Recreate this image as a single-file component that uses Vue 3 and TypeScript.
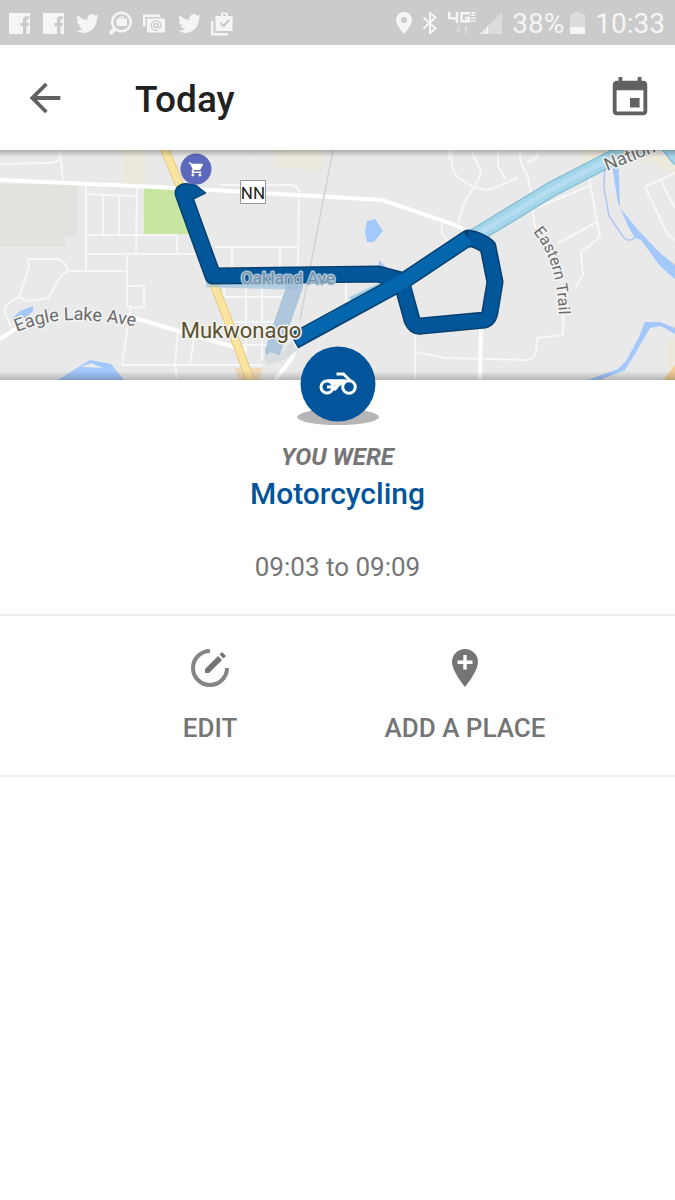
<script setup lang="ts">
interface Action {
  id: string
  label: string
}

const actions: Action[] = [
  { id: 'edit', label: 'EDIT' },
  { id: 'place', label: 'ADD A PLACE' },
]

const notifications: string[] = ['facebook', 'facebook', 'twitter', 'jobs', 'mail', 'twitter', 'bag']

const minorRoads: string[] = [
  'M0 164 L48 163 Q58 162 61 159 L59 150 M61 159 L63 180',
  'M86 184 V270 M86 194 L135 196 M103 195 V235 M119 196 V235 M137 188 L136 254 M86 235 H177 V254 M86 254 H205',
  'M127 255 V305 Q130 309 144 307 V286 H127 M127 271 H70 Q63 272 59 279 L48 298 L28 301 L19 297 L29 267 L28 259 H58 Q66 262 68 271',
  'M19 297 Q2 305 5 313 L11 327 M131 305 L122 365 H240 M178 330 L175 365 L177 379 M194 338 L190 365',
  'M220 185 H293 Q299 188 299 192 L298 270 M215 247 H298 M232 247 V270 M280 247 V270',
  'M224 288 V297 M246 285 V355 M262 288 V360 M225 297 H282 M222 322 H275 M235 345 H270 M225 365 H262',
  'M346 282 V302 M415 329 V379 M416 352 L445 358 L528 360 Q535 358 536 352 L537 338 L563 335 L564 290',
  'M452 150 Q450 172 459 178 L473 187 L488 190 Q505 184 518 177 M471 150 L481 172 Q478 183 465 201 L458 223',
  'M498 150 V166 L506 180 M520 150 Q519 164 527 174 L531 193 L535 228 M539 150 Q538 160 526 163',
  'M449 160 Q450 147 447 144 M443 222 Q438 235 449 242',
  'M589 178 L600 237 L581 252 L583 275 L576 287 M536 208 L589 186 M558 243 L597 222',
  'M675 173 L645 187 L668 235 L675 240 M661 181 L675 208',
]
</script>

<template>
  <main class="screen">
    <header class="status">
      <div class="status-left">
        <svg v-for="(name, i) in notifications" :key="i" class="status-icon" viewBox="0 0 24 24" aria-hidden="true">
          <path v-if="name === 'facebook'" fill-rule="evenodd" d="M1 2h21v21h-3.500v-8h2l.5-3h-2.500v-2c0-1.200.5-1.700 1.500-1.700h1V5.300h-2.500C16 5.300 15 7 15 9.500V12h-2.500v3H15v8H1z" />
          <path v-else-if="name === 'twitter'" transform="translate(-.5 .5)" d="M23.600 4.900a9.600 9.600 0 0 1-2.700.75 4.700 4.700 0 0 0 2-2.600 9.500 9.500 0 0 1-3 1.150 4.700 4.700 0 0 0-8 4.300A13.400 13.400 0 0 1 2.200 3.600a4.700 4.700 0 0 0 1.450 6.300 4.700 4.700 0 0 1-2.150-.6v.06a4.700 4.700 0 0 0 3.800 4.600 4.700 4.700 0 0 1-2.150.08 4.700 4.700 0 0 0 4.400 3.300A9.500 9.500 0 0 1 .6 19.300a13.400 13.400 0 0 0 7.250 2.100c8.700 0 13.800-7.400 13.500-14.100a9.600 9.600 0 0 0 2.250-2.400z" />
          <g v-else-if="name === 'jobs'">
            <circle cx="11.500" cy="11" r="9.300" fill="none" stroke="currentColor" stroke-width="2.500" />
            <path d="M4 16l2.700 2.700-5.200 5.200-2.700-2.700z" />
            <path fill-rule="evenodd" d="M6.500 7.500h3V5.500H14v2h3V15H6.500zM10.500 7.500H13V6.500h-2.500z" />
          </g>
          <g v-else-if="name === 'mail'">
            <path d="M-1 3.500h17.500V6H1.500v9.500H-1z" />
            <rect x="3" y="7.500" width="18" height="14" rx="1" />
            <circle class="cut" cx="12" cy="14.500" r="2" />
            <path class="cut" d="M14 12v3.500c0 2 3 2 3-.8 0-6.400-9.600-6.200-9.600-.2 0 4.500 4 5.600 6.600 4.400" />
          </g>
          <g v-else>
            <path d="M-1 10h2.500v12H16v2.500H-1z" />
            <path fill-rule="evenodd" d="M3.500 5H9V3.500Q9 1.500 11 1.500h3q2 0 2 2V5h4.500v15h-17zM11 5h3V3.300h-3z" />
            <path class="cut bold" d="M8.500 12l3 3 5.500-6" />
          </g>
        </svg>
      </div>
      <div class="status-right">
        <svg class="pin" viewBox="0 0 16 22" aria-hidden="true"><path fill-rule="evenodd" d="M8 0a8 8 0 0 0-8 8c0 5.500 8 14 8 14s8-8.500 8-14a8 8 0 0 0-8-8zm0 5a3 3 0 1 1 0 6 3 3 0 0 1 0-6z" /></svg>
        <svg class="bt" viewBox="0 0 16 22" aria-hidden="true"><path fill="none" stroke="currentColor" stroke-width="2" d="M1.500 5.500l12 11L8 21V1l5.500 4.500-12 11" /></svg>
        <svg class="lte" viewBox="0 0 28 24" aria-hidden="true">
          <path fill="none" stroke="currentColor" stroke-width="2.500" d="M1.200 1v6.200h9M9 1v11M22 2.200h-8.500v8H21V7h-4" />
          <path fill="none" stroke="currentColor" stroke-width="1.200" d="M23 1.600h5M23 4.400h4M23 7.200h5M23 10.200h5M25 1.600v2.800" />
          <path opacity=".4" d="M9.500 15h2v4.500H13l-2.500 3-2.500-3h1.500zM17 22.500h2V18h1.500L18 15l-2.500 3H17z" />
        </svg>
        <svg class="signal" viewBox="0 0 22 22" aria-hidden="true">
          <path opacity=".4" d="M22 0v22H0z" /><path d="M0 22l2-2v2zM3 19l2-2v5H3zM6 16l2-2v8H6z" />
        </svg>
        <span class="percent">38%</span>
        <svg class="battery" viewBox="0 0 15 22" aria-hidden="true">
          <path opacity=".4" d="M4 0h7v2h4v13H0V2h4z" /><path d="M0 15h15v7H0z" />
        </svg>
        <time class="clock">10:33</time>
      </div>
    </header>

    <nav class="appbar">
      <button class="icon-button" type="button" aria-label="Back">
        <svg viewBox="0 0 24 24" aria-hidden="true"><path d="M20 11H7.830l5.590-5.590L12 4l-8 8 8 8 1.410-1.410L7.830 13H20v-2z" /></svg>
      </button>
      <h1>Today</h1>
      <button class="icon-button" type="button" aria-label="Choose a date">
        <svg viewBox="0 0 24 24" aria-hidden="true"><path d="M17 12h-5v5h5v-5zM16 1v2H8V1H6v2H5c-1.110 0-1.990.9-1.990 2L3 19c0 1.100.89 2 2 2h14c1.100 0 2-.9 2-2V5c0-1.100-.9-2-2-2h-1V1h-2zm3 18H5V8h14v11z" /></svg>
      </button>
    </nav>

    <section class="map">
      <svg class="map-art" viewBox="0 150 675 230" role="img" aria-label="Route through Mukwonago">
        <defs>
          <path id="eagle-line" d="M17 332 Q48 319 78 320 T144 328" />
          <path id="trail-line" d="M533 232 Q560 262 559 330" />
          <path id="national-line" d="M607 171 L690 138" />
          <linearGradient id="top-shade" x1="0" y1="0" x2="0" y2="1">
            <stop offset="0" stop-color="#000" stop-opacity=".26" />
            <stop offset="1" stop-color="#000" stop-opacity="0" />
          </linearGradient>
          <linearGradient id="bottom-shade" x1="0" y1="0" x2="0" y2="1">
            <stop offset="0" stop-color="#000" stop-opacity="0" />
            <stop offset="1" stop-color="#000" stop-opacity=".22" />
          </linearGradient>
        </defs>
        <rect y="150" width="675" height="230" fill="#e9e9e9" />
        <path fill="#e2e3de" d="M0 184H77V236H65V247H0z" />
        <path fill="#c8e6a2" d="M144 188L180 189L196 234H144z" />
        <path fill="#ece9dc" d="M123 150h22v34h-22zM274 150h50l-3 20-48-2zM580 150h70l25 10v15l-25-14-70 7zM668 340h7v40h-7z" />
        <path fill="#f3cf98" d="M675 365v15h-12z" />
        <path fill="#f3cf98" opacity=".6" d="M235 368h28l-4 12h-20z" />
        <g fill="#a3c8fb">
          <path d="M365 232L367 221L375 219L383 231L374 242H367zM379 260L387 268H379z" />
          <path d="M58 380L90 360L111 364L124 380zM12 319L20 311L33 306V311L25 318L15 321z" />
          <path d="M610 150L614 178L618 203L628 226L635 238L641 240L660 266L675 279V265L660 253L639 231L620 208L618 150z" />
          <path d="M587 380L618 369L626 361L639 337L645 322L660 322L675 328V334L661 326L650 328L632 359L625 370L600 380z" />
        </g>
        <path fill="#e9e9e9" d="M81 367L91 363L103 368z" />
        <path fill="none" stroke="#adc9ef" stroke-width="1.500" d="M605 160L604 188L609 216L624 238Q630 243 635 237" />
        <g fill="none" stroke="#f7f7f7" stroke-width="2" stroke-linejoin="round">
          <path v-for="road in minorRoads" :key="road" :d="road" />
        </g>
        <path fill="none" stroke="#fff" stroke-width="4" d="M0 180L135 186L230 191L382 200L450 223L475 234M0 339L20 326M135 318L178 331L245 350M481 325L480 380M297 345L292 358L275 380" />
        <path fill="none" stroke="#d3d3d3" stroke-width="1.500" d="M333 150L300 320" />
        <path fill="none" stroke="#e8c983" stroke-width="9" d="M164 148L182 190L214 285L226 315L251 382" />
        <path fill="none" stroke="#fbe3a0" stroke-width="7" d="M164 148L182 190L214 285L226 315L251 382" />
        <path fill="none" stroke="#8cb9d8" stroke-width="10" opacity=".55" d="M206 282L298 285" />
        <path fill="none" stroke="#9dbdd8" stroke-width="16" stroke-linecap="round" stroke-linejoin="round" opacity=".8" d="M295 286L282 323L273 351" />
        <path fill="#d8dde0" d="M264 357L270 352L280 355L291 342L298 350L284 360L267 365z" />
        <path fill="none" stroke="#6ebad8" stroke-width="4" opacity=".6" d="M350 299L390 280" />
        <g fill="none" stroke-linejoin="round">
          <path stroke="#87bfd5" stroke-width="16" d="M465 242L552 189L612 158L645 148M668 145L680 160" />
          <path stroke="#a3d6ea" stroke-width="13" d="M465 242L552 189L612 158L645 148M668 145L680 160" />
          <path stroke="#b5dcef" stroke-width="5" d="M470 239L552 189L612 158" />
          <path stroke="#08406f" stroke-width="17" d="M189 192Q181 190 184 196L213 276L378 274L401 280L412 320Q415 327 421 326L485 320Q489 318 490 312L495 282L488 247Q480 240 468 238L402 282L294 341" />
          <path fill="#02569a" stroke="#08406f" d="M179 188L190 184L196 185L206 193L194 199L188 199z" />
          <path stroke="#02569a" stroke-width="14" d="M191 192L189 192Q181 190 184 196L213 276L378 274L401 280L412 320Q415 327 421 326L485 320Q489 318 490 312L495 282L488 247Q480 240 468 238" />
          <path stroke="#0467ad" stroke-width="14" d="M468 238L402 282L295 340" />
        </g>
        <circle cx="196" cy="169" r="15.500" fill="#5c69bd" />
        <path fill="#fff" transform="translate(188 161) scale(.7)" d="M7 18c-1.100 0-2 .9-2 2s.9 2 2 2 2-.9 2-2-.9-2-2-2zM1 2v2h2l3.600 7.590-1.350 2.450C4.520 15.370 5.480 17 7 17h12v-2H7.420l1.130-2h7.450c.75 0 1.410-.41 1.750-1.030l3.580-6.490A1 1 0 0 0 20 4H5.210l-.94-2H1zm16 16c-1.100 0-2 .9-2 2s.9 2 2 2 2-.9 2-2-.9-2-2-2z" />
        <rect x="240.500" y="180.500" width="25" height="23" fill="#fff" stroke="#999" />
        <text class="map-text shield" x="253" y="199" text-anchor="middle">NN</text>
        <text class="map-text oakland" x="288" y="284" text-anchor="middle">Oakland Ave</text>
        <text class="map-text town" x="241" y="338" text-anchor="middle">Mukwonago</text>
        <text class="map-text road"><textPath href="#eagle-line">Eagle Lake Ave</textPath></text>
        <text class="map-text trail"><textPath href="#trail-line">Eastern Trail</textPath></text>
        <text class="map-text road"><textPath href="#national-line">Nation</textPath></text>
        <rect y="150" width="675" height="7" fill="url(#top-shade)" />
        <rect y="371" width="675" height="9" fill="url(#bottom-shade)" />
      </svg>
      <svg class="badge" viewBox="0 0 84 80" aria-hidden="true">
        <ellipse cx="42" cy="71" rx="41" ry="8" fill="#b6b6b6" />
        <circle cx="42" cy="38" r="37.500" fill="#03559b" />
        <path fill="#fff" d="M31 33.300H50L46 38.500L43 40.500L40 44.500H37L38.500 39L33 36H31z" />
        <g fill="none" stroke="#fff" stroke-width="3">
          <circle cx="31" cy="41" r="6" />
          <circle cx="53" cy="41" r="6.300" />
          <path d="M31 41H38M40.500 28H47.500L54 34.500" />
        </g>
      </svg>
    </section>

    <section class="summary">
      <p class="were">YOU WERE</p>
      <h2>Motorcycling</h2>
      <p class="period">09:03 to 09:09</p>
    </section>

    <section class="actions">
      <div class="action-grid">
        <button v-for="action in actions" :key="action.id" class="action" type="button">
          <svg viewBox="0 0 40 40" aria-hidden="true">
            <g v-if="action.id === 'edit'">
              <path fill="none" stroke="#858585" stroke-width="4" d="M20 3A17 17 0 1 0 37 20" />
              <path d="M15 21L28 8L32 12L19 25H15zM29.500 6.500L32 4L36 8L33.500 10.500z" />
            </g>
            <path v-else fill-rule="evenodd" d="M20 1A13 13 0 0 0 7 14C7 23.500 20 39 20 39S33 23.500 33 14A13 13 0 0 0 20 1zM18.300 7H21.700V12.500H27.500V15.900H21.700V21.500H18.300V15.900H12.500V12.500H18.300z" />
          </svg>
          <span>{{ action.label }}</span>
        </button>
      </div>
    </section>
  </main>
</template>

<style>
body {
  margin: 0;
  background: #fff;
}
</style>

<style scoped>
.screen {
  min-height: 100vh;
  background: #fff;
  color: #757575;
  font-family: Roboto, "Liberation Sans", sans-serif;
}
svg {
  display: block;
  fill: currentColor;
}
h1,
h2,
p {
  margin: 0;
}
button {
  padding: 0;
  border: 0;
  background: none;
  color: inherit;
  font: inherit;
  cursor: pointer;
}
.status {
  display: flex;
  justify-content: space-between;
  align-items: center;
  height: 45px;
  padding: 0 10px 0 8px;
  background: #cbcbcb;
  color: #f5f5f5;
}
.status-left,
.status-right {
  display: flex;
  align-items: center;
}
.status-left {
  gap: 10px;
}
.status-icon {
  width: 24px;
  height: 24px;
  overflow: visible;
}
.cut {
  fill: none;
  stroke: #cbcbcb;
  stroke-width: 1.3;
}
.bold {
  stroke-width: 2;
}
.pin,
.bt {
  width: 16px;
  height: 22px;
  margin-right: 10px;
}
.lte {
  width: 28px;
  height: 24px;
  margin-right: 4px;
}
.signal {
  width: 22px;
  height: 22px;
  margin-right: 10px;
}
.battery {
  width: 15px;
  height: 22px;
  margin: 0 10px 0 6px;
}
.percent,
.clock {
  padding-top: 2px;
  font-size: 28px;
  line-height: 32px;
}
.appbar {
  display: flex;
  align-items: center;
  height: 105px;
  padding: 0 22px;
  color: #616161;
}
.icon-button,
.icon-button svg {
  width: 46px;
  height: 46px;
}
.appbar h1 {
  flex: 1;
  padding: 4px 0 0 67px;
  color: #212121;
  font-size: 37px;
  font-weight: 500;
  line-height: 46px;
}
.map {
  position: relative;
}
.map-art {
  width: 100%;
  height: auto;
}
.badge {
  position: absolute;
  bottom: -46px;
  left: 50%;
  width: 84px;
  height: 80px;
  transform: translateX(-50%);
}
.map-text {
  fill: #6b6b6b;
  stroke: #f3f3f3;
  stroke-width: 3px;
  stroke-linejoin: round;
  paint-order: stroke;
  font-size: 18px;
}
.shield {
  fill: #222;
  stroke: none;
  font-size: 17px;
}
.oakland {
  fill: #7590a8;
  stroke: #a9c3d6;
  font-size: 17px;
}
.town {
  fill: #5b502c;
  font-size: 22px;
}
.trail {
  font-size: 16px;
}
.summary {
  padding: 61px 16px 31px;
  border-bottom: 2px solid #eee;
  text-align: center;
}
.were {
  font-size: 24px;
  font-style: italic;
  font-weight: 700;
  line-height: 32px;
}
.summary h2 {
  color: #03559b;
  font-size: 30px;
  font-weight: 500;
  line-height: 42px;
}
.period {
  padding-top: 36px;
  font-size: 26px;
  line-height: 32px;
}
.actions {
  padding: 32px 16px 31px;
  border-bottom: 2px solid #eee;
}
.action-grid {
  display: grid;
  grid-template-columns: 1fr 1fr;
  max-width: 510px;
  margin: 0 auto;
}
.action {
  display: flex;
  flex-direction: column;
  align-items: center;
  gap: 24px;
  font-size: 26px;
  font-weight: 500;
  line-height: 32px;
}
.action svg {
  width: 40px;
  height: 40px;
}
</style>
